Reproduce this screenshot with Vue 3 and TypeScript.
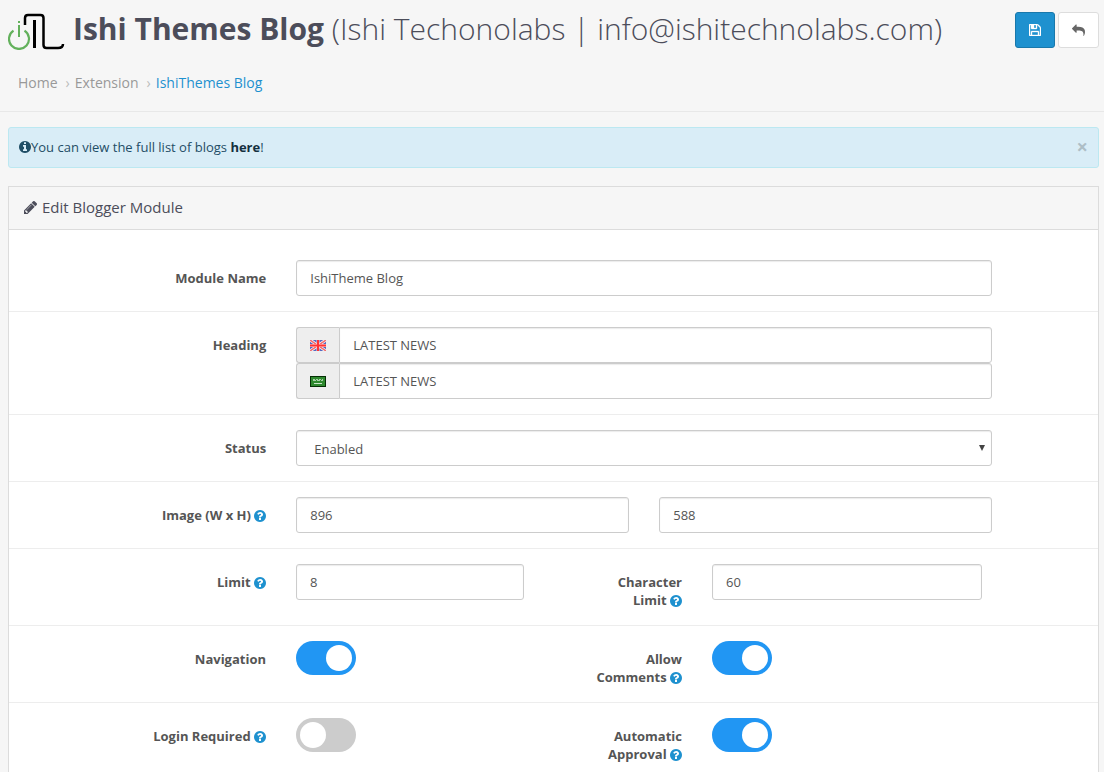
<script setup lang="ts">
import { ref } from 'vue'

const circle =
  'm0 0q0 209-103 385.5t-279.5 279.5-385.5 103-385.5-103-279.5-279.5-103-385.5 103-385.5 279.5-279.5 385.5-103 385.5 103 279.5 279.5 103 385.5z'
const icons = {
  info:
    'M1152 1376v-160q0-14-9-23t-23-9h-96v-512q0-14-9-23t-23-9h-320q-14 0-23 9t-9 23v160q0 14 9 23t23 9h96v320h-96q-14 0-23 9t-9 23v160q0 14 9 23t23 9h448q14 0 23-9t9-23zm-128-896v-160q0-14-9-23t-23-9h-192q-14 0-23 9t-9 23v160q0 14 9 23t23 9h192q14 0 23-9t9-23zM1664 896' + circle,
  help:
    'M1024 1376v-192q0-14-9-23t-23-9h-192q-14 0-23 9t-9 23v192q0 14 9 23t23 9h192q14 0 23-9t9-23zm256-672q0-88-55.5-163t-138.5-116-170-41q-243 0-371 213-15 24 8 42l132 100q7 6 19 6 16 0 25-12 53-68 86-92 34-24 86-24 48 0 85.5 26t37.5 59q0 38-20 61t-68 45q-63 28-115.5 86.5t-52.5 125.5v36q0 14 9 23t23 9h192q14 0 23-9t9-23q0-19 21.5-49.5t54.5-49.5q32-18 49-28.5t46-35 44.5-48 28-60.5 12.5-81zM1664 896' + circle,
  save:
    'M512 1536h768v-384h-768v384zm896 0h128v-896q0-14-10-38.5t-20-34.5l-281-281q-10-10-34-20t-39-10v416q0 40-28 68t-68 28h-576q-40 0-68-28t-28-68v-416h-128v1280h128v-416q0-40 28-68t68-28h832q40 0 68 28t28 68v416zm-384-928v-320q0-13-9.5-22.5t-22.5-9.5h-192q-13 0-22.5 9.5t-9.5 22.5v320q0 13 9.5 22.5t22.5 9.5h192q13 0 22.5-9.5t9.5-22.5zm640 32v928q0 40-28 68t-68 28h-1344q-40 0-68-28t-28-68v-1344q0-40 28-68t68-28h928q40 0 88 20t76 48l280 280q28 28 48 76t20 88z',
  reply:
    'M1792 1120q0 166-127 451-3 7-10.5 24t-13.5 30-13 22q-12 17-28 17-15 0-23.5-10t-8.5-25q0-9 2.5-26.5t2.5-23.5q5-68 5-123 0-101-17.5-181t-48.5-138.5-80-101-105.5-69.5-133-42.5-154-21.5-175.5-6h-224v256q0 26-19 45t-45 19-45-19l-512-512q-19-19-19-45t19-45l512-512q19-19 45-19t45 19 19 45v256h224q713 0 875 403 53 134 53 333z',
  pencil:
    'M491 1536l91-91-235-235-91 91v107h128v128h107zm523-928q0-22-22-22-10 0-17 7l-542 542q-7 7-7 17 0 22 22 22 10 0 17-7l542-542q7-7 7-17zm-54-192l416 416-832 832h-416v-416zm683 96q0 53-37 90l-166 166-416-416 166-165q36-38 90-38 53 0 91 38l235 234q37 39 37 91z',
}

const moduleName = ref('IshiTheme Blog')
const headingEn = ref('LATEST NEWS')
const headingAr = ref('LATEST NEWS')
const status = ref('1')
const imageWidth = ref('896')
const imageHeight = ref('588')
const limit = ref('8')
const characterLimit = ref('60')
const navigation = ref(true)
const allowComments = ref(true)
const loginRequired = ref(false)
const automaticApproval = ref(true)
const noticeOpen = ref(true)
</script>

<template>
  <div class="page">
    <header class="page-header">
      <div class="title-row">
        <h1>
          <svg class="logo" viewBox="0 0 58 42" aria-hidden="true">
            <path d="M5.500 22.600A10 10 0 1 0 16.500 22.600" fill="none" stroke="#63b15c" stroke-width="2.200" />
            <path d="M11 17v12" stroke="#63b15c" stroke-width="2" />
            <rect x="10" y="13" width="2" height="2" fill="#63b15c" />
            <path d="M17 17V10q0-3 3-3h12.500q3 0 3 3v27q0 3 3 3H50q5 0 5-4" fill="none" stroke="#000" stroke-width="2.500" />
            <path d="M26.500 12v28" stroke="#000" stroke-width="3" />
          </svg>
          <span><strong>Ishi Themes Blog</strong> (Ishi Techonolabs | info@ishitechnolabs.com)</span>
        </h1>
        <div class="actions">
          <button class="btn primary" type="submit" form="module-form" aria-label="Save">
            <svg class="icon save" viewBox="128 128 1536 1536"><path :d="icons.save" /></svg>
          </button>
          <a class="btn" href="#" aria-label="Back">
            <svg class="icon wide" viewBox="0 0 1792 1792"><path :d="icons.reply" /></svg>
          </a>
        </div>
      </div>
      <nav class="breadcrumb" aria-label="Breadcrumb">
        <a href="#">Home</a><span class="sep">›</span>
        <a href="#">Extension</a><span class="sep">›</span>
        <a class="current" href="#">IshiThemes Blog</a>
      </nav>
    </header>

    <main>
      <div v-if="noticeOpen" class="notice" role="status">
        <svg class="icon" viewBox="128 128 1536 1536"><path :d="icons.info" /></svg>
        <span>You can view the full list of blogs <a href="#">here</a>!</span>
        <button class="close" type="button" aria-label="Close" @click="noticeOpen = false">×</button>
      </div>

      <section class="panel">
        <h2>
          <svg class="icon wide" viewBox="128 149 1515 1515"><path :d="icons.pencil" /></svg>
          Edit Blogger Module
        </h2>
        <form id="module-form" @submit.prevent>
          <div class="row">
            <label for="name">Module Name</label>
            <div class="field"><input id="name" v-model="moduleName" class="control" type="text" /></div>
          </div>
          <div class="row">
            <label for="heading-en">Heading</label>
            <div class="field">
              <div class="group">
                <span class="addon">
                  <svg class="flag" viewBox="0 0 16 11" aria-hidden="true">
                    <rect width="16" height="11" fill="#5568c0" />
                    <path d="M0 0l16 11M16 0L0 11" stroke="#fff" stroke-width="3" />
                    <path d="M0 0l16 11M16 0L0 11" stroke="#f26d6d" stroke-width="1.500" />
                    <path d="M8 0v11M0 5.500h16" stroke="#fbd5d5" stroke-width="3" />
                    <path d="M8 0v11M0 5.500h16" stroke="#f33" stroke-width="2" />
                  </svg>
                </span>
                <input id="heading-en" v-model="headingEn" class="control" type="text" />
              </div>
              <div class="group">
                <span class="addon">
                  <svg class="flag" viewBox="0 0 16 11" aria-hidden="true">
                    <rect width="16" height="11" fill="#052f05" />
                    <rect x="1" y="1" width="14" height="9" fill="#2f8a2f" />
                    <path d="M3 3.500h10" stroke="#a5d0a5" stroke-dasharray="2 1" />
                    <path d="M3 4.500h10" stroke="#a5d0a5" stroke-dasharray="3 1" />
                    <path d="M4 7.500h8" stroke="#c8e6c8" />
                  </svg>
                </span>
                <input v-model="headingAr" class="control" type="text" aria-label="Heading, Arabic" />
              </div>
            </div>
          </div>
          <div class="row">
            <label for="status">Status</label>
            <div class="field select">
              <select id="status" v-model="status" class="control">
                <option value="1">Enabled</option>
                <option value="0">Disabled</option>
              </select>
              <svg class="arrow" viewBox="0 0 6 6" aria-hidden="true"><path d="M0 0h6L3 6z" /></svg>
            </div>
          </div>
          <div class="row">
            <label for="width">Image (W x H) <svg class="help" viewBox="128 128 1536 1536"><path :d="icons.help" /></svg></label>
            <div class="field pair">
              <input id="width" v-model="imageWidth" class="control" type="text" />
              <input v-model="imageHeight" class="control" type="text" aria-label="Image height" />
            </div>
          </div>
          <div class="row double">
            <label for="limit">Limit <svg class="help" viewBox="128 128 1536 1536"><path :d="icons.help" /></svg></label>
            <div class="field"><input id="limit" v-model="limit" class="control" type="text" /></div>
            <label for="chars">Character Limit <svg class="help" viewBox="128 128 1536 1536"><path :d="icons.help" /></svg></label>
            <div class="field"><input id="chars" v-model="characterLimit" class="control" type="text" /></div>
          </div>
          <div class="row double">
            <label for="nav">Navigation</label>
            <div class="field"><input id="nav" v-model="navigation" class="toggle" type="checkbox" /></div>
            <label for="comments">Allow Comments <svg class="help" viewBox="128 128 1536 1536"><path :d="icons.help" /></svg></label>
            <div class="field"><input id="comments" v-model="allowComments" class="toggle" type="checkbox" /></div>
          </div>
          <div class="row double">
            <label for="login">Login Required <svg class="help" viewBox="128 128 1536 1536"><path :d="icons.help" /></svg></label>
            <div class="field"><input id="login" v-model="loginRequired" class="toggle" type="checkbox" /></div>
            <label for="approval">Automatic Approval <svg class="help" viewBox="128 128 1536 1536"><path :d="icons.help" /></svg></label>
            <div class="field"><input id="approval" v-model="automaticApproval" class="toggle" type="checkbox" /></div>
          </div>
        </form>
      </section>
    </main>
  </div>
</template>

<style>
body {
  margin: 0;
  background: #f6f6f6;
}
html {
  overflow: hidden auto;
  scrollbar-width: none;
}
</style>

<style scoped>
.page {
  box-sizing: border-box;
  color: #555;
  font: 13px/18px "Open Sans", "Noto Sans", sans-serif;
}
.page *,
.page *::before {
  box-sizing: border-box;
}
a {
  color: inherit;
  text-decoration: none;
}
.page-header {
  padding: 8px 5px 18px 8px;
  border-bottom: 1px solid #e8e8e8;
}
.title-row {
  display: flex;
  align-items: flex-start;
  justify-content: space-between;
}
h1 {
  display: flex;
  align-items: center;
  gap: 7px;
  margin: 0;
  color: #4c4d5a;
  font-size: 30px;
  font-weight: 300;
  line-height: 42px;
}
h1 strong {
  font-weight: 700;
}
.logo {
  flex: none;
  width: 58px;
  height: 42px;
}
.actions {
  display: flex;
  gap: 3px;
  padding-top: 4px;
}
.btn {
  display: flex;
  align-items: center;
  justify-content: center;
  height: 36px;
  padding: 0 13px;
  border: 1px solid #ddd;
  border-radius: 3px;
  background: #fff;
  color: #666;
}
.btn.primary {
  border-color: #1978ab;
  background: #1e91cf;
  color: #fff;
}
.icon {
  flex: none;
  width: 12px;
  height: 12px;
  fill: currentColor;
}
.icon.wide {
  width: 13px;
  height: 13px;
}
.icon.save {
  stroke: currentColor;
  stroke-width: 50px;
}
.breadcrumb {
  display: flex;
  align-items: center;
  margin-top: 23px;
  padding: 0 10px;
  color: #999;
  font-size: 14px;
  line-height: 20px;
}
.sep {
  padding: 0 5px 0 8px;
  color: #bbb;
}
.current {
  color: #1e91cf;
}
main {
  padding: 15px 5px 0 8px;
}
.notice {
  display: flex;
  align-items: center;
  min-height: 41px;
  margin-bottom: 18px;
  padding: 0 10px 2px;
  border: 1px solid #bce8f1;
  border-radius: 3px;
  background: #d9edf7;
  color: #1f4e66;
}
.notice a {
  color: #14303f;
  font-weight: 700;
}
.close {
  margin-left: auto;
  padding: 0;
  border: 0;
  background: none;
  color: #adbec6;
  font: 700 20px/18px "Open Sans", sans-serif;
}
.panel {
  border: 1px solid #dcdcdc;
  background: #fff;
}
h2 {
  display: flex;
  align-items: center;
  gap: 5px;
  margin: 0;
  padding: 10px 15px 12px;
  border-bottom: 1px solid #dcdcdc;
  background: #f6f6f6;
  color: #4c4d5a;
  font-size: 15px;
  font-weight: 400;
  line-height: 20px;
}
form {
  padding: 15px 0;
}
.row {
  display: grid;
  grid-template-columns: 3fr 8fr 1fr;
  padding: 15px 0;
}
.row + .row {
  border-top: 1px solid #ededed;
}
.row.double {
  grid-template-columns: 272fr 258fr 158fr 300fr 101fr;
}
.row label {
  padding: 9px 15px 1px;
  font-weight: 700;
  text-align: right;
}
.double .field + label {
  padding-left: 48px;
}
.help {
  width: 12px;
  height: 12px;
  fill: #1e91cf;
  vertical-align: -2px;
}
.field {
  min-width: 0;
  padding: 0 15px;
}
.control {
  display: block;
  width: 100%;
  min-width: 0;
  height: 36px;
  margin: 0;
  padding: 8px 13px;
  border: 1px solid #ccc;
  border-radius: 3px;
  background: #fff;
  box-shadow: inset 0 1px 1px rgba(0, 0, 0, 0.08);
  color: #555;
  font: inherit;
}
.group {
  display: flex;
}
.addon {
  display: flex;
  flex: none;
  align-items: center;
  justify-content: center;
  width: 43px;
  border: 1px solid #ccc;
  border-right: 0;
  border-radius: 3px 0 0 3px;
  background: #eee;
}
.group .control {
  flex: 1;
  border-radius: 0 3px 3px 0;
}
.flag {
  width: 16px;
  height: 11px;
}
.select {
  display: grid;
  align-items: center;
}
.select > * {
  grid-area: 1 / 1;
}
select.control {
  padding: 9px 17px 7px;
  appearance: none;
}
.arrow {
  justify-self: end;
  width: 6px;
  height: 6px;
  margin-right: 7px;
  fill: #444;
  pointer-events: none;
}
.pair {
  display: grid;
  grid-template-columns: 1fr 1fr;
  gap: 30px;
}
.toggle {
  display: flex;
  align-items: center;
  width: 60px;
  height: 34px;
  margin: 0;
  padding: 0 4px;
  border-radius: 17px;
  background: #ccc;
  appearance: none;
}
.toggle::before {
  width: 26px;
  height: 26px;
  border-radius: 50%;
  background: #fff;
  content: "";
}
.toggle:checked {
  justify-content: flex-end;
  background: #2196f3;
}
</style>
